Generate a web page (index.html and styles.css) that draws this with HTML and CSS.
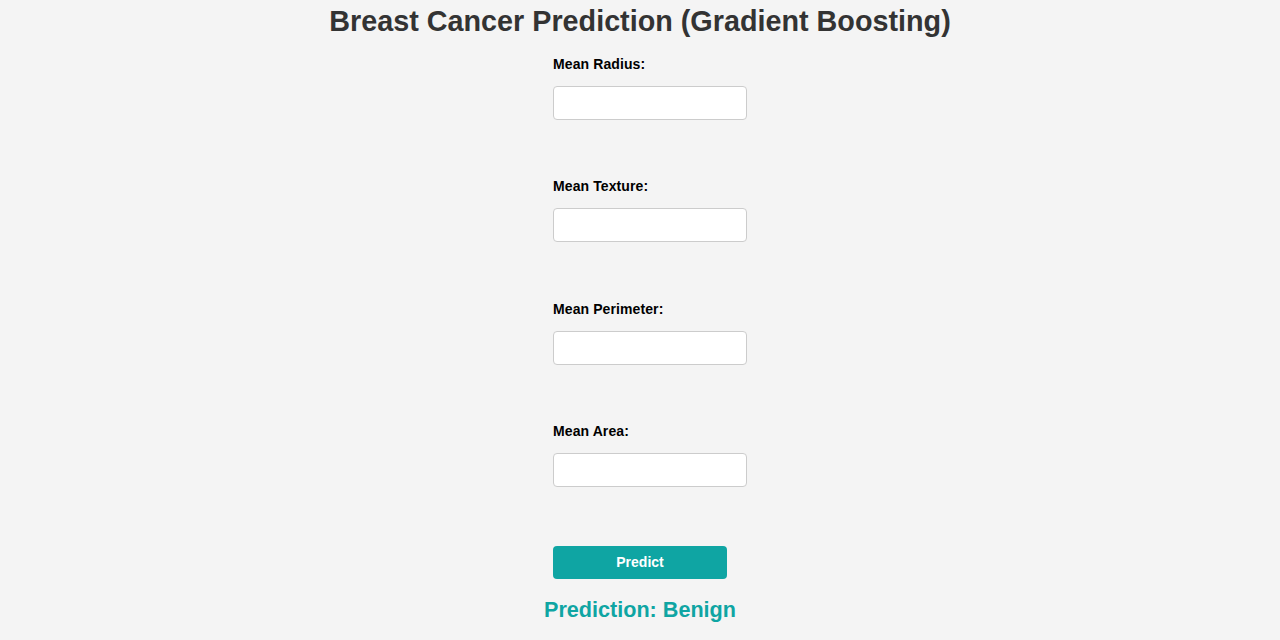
FILE: index.html
```html
<!DOCTYPE html>
<html>
<head>
<meta charset="utf-8">
<link rel="stylesheet" href="styles.css">
</head>
<body>
<h1 class="title">Breast Cancer Prediction (Gradient Boosting)</h1>
<form class="form">
  <label class="label">Mean Radius:</label>
  <input class="input" type="text">
  <label class="label">Mean Texture:</label>
  <input class="input" type="text">
  <label class="label">Mean Perimeter:</label>
  <input class="input" type="text">
  <label class="label">Mean Area:</label>
  <input class="input" type="text">
  <button class="button" type="button">Predict</button>
</form>
<h2 class="result">Prediction: Benign</h2>
</body>
</html>
```
FILE: styles.css
```css
html, body {
  margin: 0;
  padding: 0;
  background: #f4f4f4;
  font-family: "Liberation Sans", Arial, sans-serif;
}
.title {
  margin: 3px 0 0;
  text-align: center;
  font-size: 28.75px;
  line-height: 36px;
  color: #333;
}
.form {
  width: 174px;
  margin: 0 auto;
  display: flex;
  flex-direction: column;
  align-items: flex-start;
}
.label {
  display: block;
  font-size: 14px;
  font-weight: bold;
  line-height: 16px;
  color: #000;
  margin-top: 20px;
  margin-bottom: 14px;
  letter-spacing: 0.1px;
}
.label:first-child {
  margin-top: 17px;
}
.label ~ .label {
  margin-top: 58.33px;
}
.input {
  box-sizing: border-box;
  width: 194px;
  height: 34px;
  border: 1px solid #ccc;
  border-radius: 4px;
  background: #fff;
  margin: 0;
}
.button {
  margin-top: 59px;
  width: 174px;
  height: 33px;
  border: none;
  border-radius: 4px;
  background: #0fa5a3;
  color: #fff;
  font-family: "Liberation Sans", Arial, sans-serif;
  font-weight: bold;
  font-size: 14px;
  padding: 0;
}
.result {
  margin: 18px 0 0;
  text-align: center;
  font-size: 21.6px;
  line-height: 26px;
  color: #0fa5a3;
}
```
